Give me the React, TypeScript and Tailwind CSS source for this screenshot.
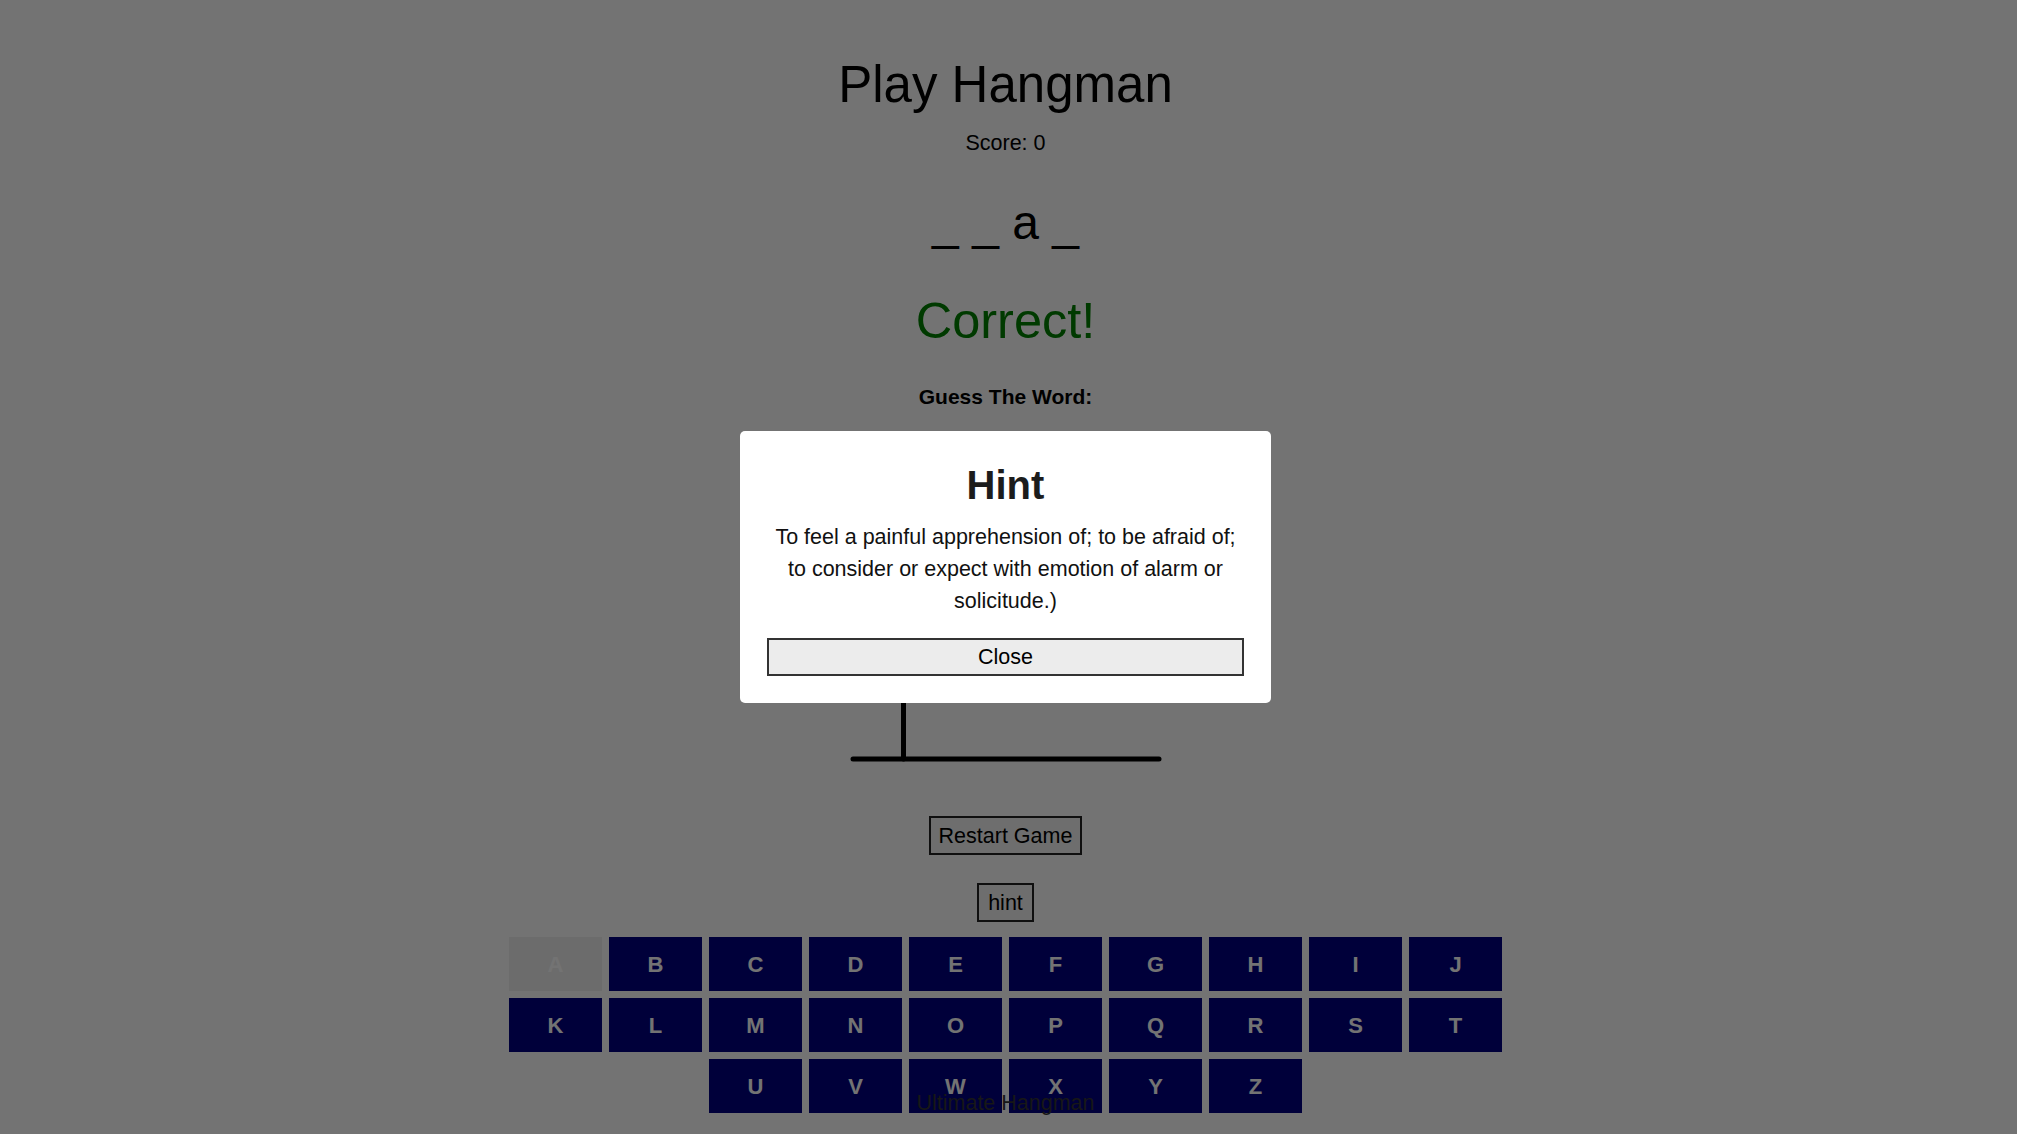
import { useState } from "react";

const letters = "ABCDEFGHIJKLMNOPQRSTUVWXYZ".split("");

export default function App() {
  const [guessed, setGuessed] = useState<string[]>(["A"]);
  const [showHint, setShowHint] = useState(true);
  const score = 0;

  return (
    <div className="relative min-h-screen bg-white pr-[6px] font-['Liberation_Sans',Arial,sans-serif] text-black">
      <main className="flex flex-col items-center pt-[55px]">
        <h1 className="text-[51px] leading-[60px] text-black">Play Hangman</h1>
        <p className="mt-[15px] text-[21.5px] leading-[26px]">Score: {score}</p>
        <p className="mt-[39px] whitespace-pre text-[48px] leading-[56px]">_ _ a _</p>
        <p className="mt-[41px] text-[50.5px] leading-[58px] text-[#008000]">Correct!</p>
        <h3 className="mt-[34px] text-[21px] font-bold leading-[26px]">Guess The Word:</h3>

        {/* gallows, mostly hidden behind the hint dialog */}
        <svg width="320" height="350" viewBox="0 0 320 350" className="mt-[10px]">
          <g stroke="#000" strokeWidth="5" strokeLinecap="round" fill="none">
            <line x1="7" y1="339" x2="313" y2="339" />
            <line x1="57.5" y1="339" x2="57.5" y2="20" />
            <line x1="57.5" y1="20" x2="200" y2="20" />
            <line x1="200" y1="20" x2="200" y2="60" />
          </g>
        </svg>

        <button
          className="mt-[46px] h-[39px] border-2 border-[#222] bg-[#f4f4f4] px-[8px] text-[21.5px] leading-[26px]"
          onClick={() => setGuessed([])}
        >
          Restart Game
        </button>
        <button
          className="mt-[28px] h-[39px] border-2 border-[#222] bg-[#f4f4f4] px-[9px] text-[21.5px] leading-[26px]"
          onClick={() => setShowHint(true)}
        >
          hint
        </button>

        <div className="mt-[15px] flex w-[993px] flex-wrap justify-center gap-[7px]">
          {letters.map((l) => {
            const used = guessed.includes(l);
            return (
              <button
                key={l}
                disabled={used}
                onClick={() => setGuessed([...guessed, l])}
                className={`h-[54px] w-[93px] text-[22px] font-bold ${used ? "bg-[#efefef] text-white" : "bg-[#000080] text-white"}`}
              >
                {l}
              </button>
            );
          })}
        </div>
      </main>

      <footer className="absolute bottom-[18px] left-0 right-[6px] text-center text-[21.5px] leading-[26px] text-[#333]">
        Ultimate Hangman
      </footer>

      {showHint && (
        <div className="fixed inset-0 flex items-center justify-center bg-black/55 pr-[6px]">
          <div className="flex h-[272px] w-[531px] flex-col items-center rounded-[5px] bg-white px-[27px] pt-[31px] text-center">
            <h2 className="text-[40px] font-bold leading-[46px] text-[#1c1c1c]">Hint</h2>
            <p className="mt-[12.5px] text-[21.5px] leading-[32px] text-[#111]">
              To feel a painful apprehension of; to be afraid of; to consider or expect with emotion of alarm or
              solicitude.)
            </p>
            <button
              className="mt-[21.5px] h-[38px] w-full border-2 border-[#333] bg-[#ececec] text-[21.5px] leading-[26px]"
              onClick={() => setShowHint(false)}
            >
              Close
            </button>
          </div>
        </div>
      )}
    </div>
  );
}
